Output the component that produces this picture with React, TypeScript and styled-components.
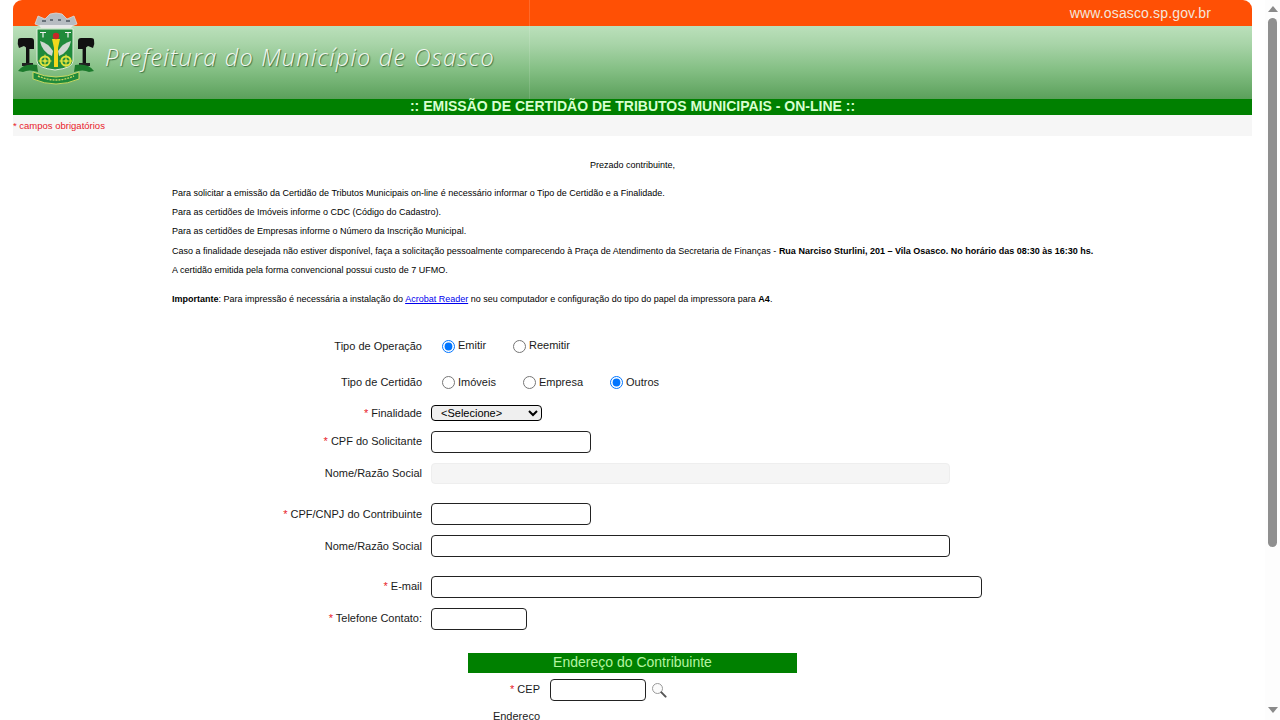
import styled, { createGlobalStyle } from "styled-components";

const GlobalStyle = createGlobalStyle`
  html, body {
    height: 100%;
    overflow: hidden;
  }
  body {
    margin: 0;
    background: #fff;
    color: #000;
    font-family: "Liberation Sans", Arial, sans-serif;
  }
`;

const Shell = styled.div`
  display: flex;
  height: 100vh;
`;

const Scroller = styled.main`
  flex: 1;
  min-width: 0;
  overflow-y: auto;
  scrollbar-width: none;
`;

const ScrollRail = styled.div`
  flex: none;
  width: 15px;
  display: flex;
  flex-direction: column;
  align-items: center;
  box-sizing: border-box;
  padding: 6px 0 7px;
  background: #fdfdfd;
`;

const ArrowUp = styled.div`
  width: 0;
  height: 0;
  border-left: 5px solid transparent;
  border-right: 5px solid transparent;
  border-bottom: 6px solid #8a8a8a;
`;

const ArrowDown = styled(ArrowUp)`
  border-bottom: 0;
  border-top: 6px solid #8a8a8a;
`;

const Thumb = styled.div`
  width: 9px;
  height: 529px;
  margin: 6px 0 auto;
  border-radius: 5px;
  background: #8f8f8f;
`;

const Page = styled.div`
  width: 1239px;
  margin: 0 auto;
  padding-bottom: 207px;
`;

const Header = styled.header`
  position: relative;
`;

const TopBar = styled.div`
  height: 26px;
  background: linear-gradient(to right, transparent 516px, #ff6a2a 516px, #ff6a2a 517px, transparent 517px), #ff5005;
  border-radius: 9px 9px 0 0;
  display: flex;
  justify-content: flex-end;
  align-items: center;
  padding-right: 41px;
  color: #f4e6dc;
  font-family: "Liberation Sans", sans-serif;
  font-size: 14px;
  letter-spacing: 0.15px;
`;

const Banner = styled.div`
  height: 73px;
  background:
    linear-gradient(to right, transparent 516px, rgba(255, 255, 255, 0.12) 516px, rgba(255, 255, 255, 0.12) 517px, transparent 517px),
    linear-gradient(#bbe0bb 0%, #a8d4a8 25%, #84bf84 60%, #5ba05b 100%);
  display: flex;
  align-items: center;
  padding: 0 0 11px 92px;
  box-sizing: border-box;
`;

const BannerTitle = styled.div`
  color: #f4f8f2;
  font-family: "Open Sans", sans-serif;
  font-style: italic;
  font-weight: 300;
  font-size: 23.5px;
  letter-spacing: 1.24px;
  text-shadow: 1px 1px 1px #3f6f3f;
  white-space: nowrap;
`;

const Crest = styled.svg`
  position: absolute;
  left: 1px;
  top: 10px;
  width: 84px;
  height: 78px;
`;

const TitleBar = styled.h1`
  margin: 0;
  height: 16px;
  background: #008000;
  color: #d8ffd0;
  font-size: 14px;
  font-weight: 700;
  line-height: 14px;
  text-align: center;
`;

const RequiredNote = styled.div`
  height: 21px;
  background: #f6f6f6;
  color: #e8202a;
  font-size: 9.5px;
  line-height: 22px;
`;

const Intro = styled.section`
  padding: 20px 0 0 159px;
  font-size: 9px;
  line-height: 19.33px;
`;

const Greeting = styled.p`
  margin: 0 0 8.45px;
  padding-right: 159px;
  text-align: center;
`;

const Line = styled.p<{ $gap?: number }>`
  margin: ${(p) => p.$gap ?? 0}px 0 0;
  white-space: nowrap;
`;

const DocLink = styled.a`
  color: #00e;
  text-decoration: underline;
`;

const Form = styled.form`
  display: flex;
  flex-direction: column;
  margin-top: 25.95px;
  font-size: 11px;
`;

const Row = styled.div<{ $gap?: number }>`
  display: flex;
  align-items: center;
  height: 22px;
  margin-top: ${(p) => p.$gap ?? 0}px;
`;

const Label = styled.label<{ $width?: number; $space?: number; $raised?: boolean }>`
  width: ${(p) => p.$width ?? 409}px;
  margin-right: ${(p) => p.$space ?? 9}px;
  padding-bottom: ${(p) => (p.$raised ? 2 : 0)}px;
  flex: none;
  text-align: right;
  color: #1a1a1a;
`;

const Star = styled.span`
  color: #e8202a;
`;

const Options = styled.div`
  display: flex;
  align-items: center;
  padding-left: 11px;
`;

const Option = styled.label<{ $width: number; $raised?: boolean }>`
  display: flex;
  align-items: center;
  width: ${(p) => p.$width}px;
  color: #1a1a1a;

  span {
    padding-bottom: ${(p) => (p.$raised ? 2 : 0)}px;
  }
`;

const Radio = styled.input.attrs({ type: "radio" })`
  width: 13px;
  height: 13px;
  margin: 0 3px 0 0;
  flex: none;
`;

const Select = styled.select`
  width: 111px;
  height: 16px;
  padding: 0 0 0 5px;
  border: 1px solid #000;
  border-radius: 4px;
  background: #efefef;
  font-family: "Liberation Sans", sans-serif;
  font-size: 11px;
`;

const TextInput = styled.input<{ $width: number }>`
  width: ${(p) => p.$width}px;
  height: 22px;
  box-sizing: border-box;
  padding: 0 4px;
  border: 1px solid #222;
  border-radius: 4px;
  background: #fff;

  &:disabled {
    height: 21px;
    margin-bottom: 1px;
    background: #f5f5f5;
    border-color: #eeeeee;
  }
`;

const SectionTitle = styled.h2`
  width: 329px;
  height: 20px;
  margin: 23px 0 0 455px;
  background: #008000;
  color: #b4f5a0;
  font-size: 14px;
  font-weight: 400;
  line-height: 18px;
  text-align: center;
`;

const SearchButton = styled.button`
  display: flex;
  width: 16px;
  height: 16px;
  margin: 0 0 0 5px;
  padding: 0;
  border: 0;
  background: none;
`;

function Crown() {
  return (
    <g>
      <path d="M21 14 L24 6 L31 9 L36 4 L42 3 L48 4 L53 9 L60 6 L63 14 L58 16 L26 16 Z" fill="#b7bcc2" stroke="#dcdcdc" strokeWidth="0.8" />
      <path d="M25 15 H59 L57 18 H27 Z" fill="#e7e7e7" />
      <path d="M28 11 h4 M36 10 h3 M44 10 h3 M52 11 h4" stroke="#4d5560" strokeWidth="1.6" />
    </g>
  );
}

function Hammer({ flip }: { flip?: boolean }) {
  return (
    <g transform={flip ? "translate(84 0) scale(-1 1)" : undefined}>
      <path d="M4 30 Q4 28 7 28 H17 Q20 28 20 31 V39 H14 L10 36 L5 38 Q3 34 4 30 Z" fill="#111" />
      <rect x="12" y="36" width="3.4" height="19" fill="#111" />
      <path d="M8 53 H19 V56 H8 Z" fill="#222" />
      <path d="M4 61 Q10 53 23 55 L24 62 Q15 59 9 62 Z" fill="#1c7a2c" />
    </g>
  );
}

function Gear({ x }: { x: number }) {
  return (
    <g>
      <circle cx={x} cy="51" r="4.6" fill="#1f8a3b" stroke="#dfe23e" strokeWidth="2" />
      <circle cx={x} cy="51" r="1.8" fill="#dfe23e" />
      <path d={`M${x - 6.5} 51 H${x + 6.5} M${x} 44.5 V57.5`} stroke="#dfe23e" strokeWidth="1" />
    </g>
  );
}

function CrestImage() {
  return (
    <Crest viewBox="0 0 84 78">
      <Crown />
      <Hammer />
      <Hammer flip />
      <path d="M23 19 H59 V51 Q59 58 41 60 Q23 58 23 51 Z" fill="#1f8a3b" stroke="#e6efe0" strokeWidth="1" />
      <path d="M26 31 Q34 33 39 41 L38 46 Q28 42 26 31 Z" fill="#cfd8d0" />
      <path d="M57 31 Q49 33 44 41 L45 46 Q55 42 57 31 Z" fill="#cfd8d0" />
      <path d="M38 29 H46 L44 38 V57 H40 V38 Z" fill="#f2d81c" />
      <circle cx="42" cy="26" r="3.2" fill="#c62828" />
      <path d="M26 22.5 h6 M29 22.5 v5 M51 22.5 h6 M54 22.5 v5" stroke="#f0f0f0" strokeWidth="1.2" />
      <Gear x={31} />
      <Gear x={52} />
      <path d="M19 62 Q42 72 65 62 L65 69 Q42 79 19 69 Z" fill="#1f8a3b" stroke="#c8d860" strokeWidth="1" />
      <path d="M24 66 Q42 74 60 66" stroke="#c8d860" strokeWidth="1.4" strokeDasharray="2 1" fill="none" />
    </Crest>
  );
}

function SearchIcon() {
  return (
    <svg width="16" height="16" viewBox="0 0 16 16">
      <circle cx="6.5" cy="6.5" r="5" fill="#fbfbfb" stroke="#9a9a9a" strokeWidth="1" />
      <path d="M10.4 10.4 L14.6 14.6" stroke="#555" strokeWidth="2" strokeLinecap="round" />
    </svg>
  );
}

export default function App() {
  return (
    <Shell>
      <GlobalStyle />
      <Scroller>
        <Page>
          <Header>
            <TopBar>www.osasco.sp.gov.br</TopBar>
            <Banner>
              <BannerTitle>Prefeitura do Município de Osasco</BannerTitle>
            </Banner>
            <CrestImage />
            <TitleBar>:: EMISSÃO DE CERTIDÃO DE TRIBUTOS MUNICIPAIS - ON-LINE ::</TitleBar>
            <RequiredNote>* campos obrigatórios</RequiredNote>
          </Header>

          <Intro>
            <Greeting>Prezado contribuinte,</Greeting>
            <Line>Para solicitar a emissão da Certidão de Tributos Municipais on-line é necessário informar o Tipo de Certidão e a Finalidade.</Line>
            <Line>Para as certidões de Imóveis informe o CDC (Código do Cadastro).</Line>
            <Line>Para as certidões de Empresas informe o Número da Inscrição Municipal.</Line>
            <Line>
              Caso a finalidade desejada não estiver disponível, faça a solicitação pessoalmente comparecendo à Praça de Atendimento da Secretaria de Finanças - <b>Rua Narciso Sturlini, 201 – Vila Osasco. No horário das 08:30 às 16:30 hs.</b>
            </Line>
            <Line>A certidão emitida pela forma convencional possui custo de 7 UFMO.</Line>
            <Line $gap={9.6}>
              <b>Importante</b>: Para impressão é necessária a instalação do <DocLink href="#">Acrobat Reader</DocLink> no seu computador e configuração do tipo do papel da impressora para <b>A4</b>.
            </Line>
          </Intro>

          <Form>
            <Row>
              <Label>Tipo de Operação</Label>
              <Options>
                <Option $width={71} $raised>
                  <Radio name="operacao" defaultChecked />
                  <span>Emitir</span>
                </Option>
                <Option $width={80} $raised>
                  <Radio name="operacao" />
                  <span>Reemitir</span>
                </Option>
              </Options>
            </Row>
            <Row $gap={14}>
              <Label>Tipo de Certidão</Label>
              <Options>
                <Option $width={81}>
                  <Radio name="certidao" />
                  <span>Imóveis</span>
                </Option>
                <Option $width={87}>
                  <Radio name="certidao" />
                  <span>Empresa</span>
                </Option>
                <Option $width={80}>
                  <Radio name="certidao" defaultChecked />
                  <span>Outros</span>
                </Option>
              </Options>
            </Row>
            <Row $gap={9}>
              <Label><Star>*</Star> Finalidade</Label>
              <Select defaultValue="">
                <option value="">&lt;Selecione&gt;</option>
              </Select>
            </Row>
            <Row $gap={7}>
              <Label $raised><Star>*</Star> CPF do Solicitante</Label>
              <TextInput $width={160} />
            </Row>
            <Row $gap={10}>
              <Label $raised>Nome/Razão Social</Label>
              <TextInput $width={519} disabled />
            </Row>
            <Row $gap={18}>
              <Label><Star>*</Star> CPF/CNPJ do Contribuinte</Label>
              <TextInput $width={160} />
            </Row>
            <Row $gap={10}>
              <Label>Nome/Razão Social</Label>
              <TextInput $width={519} />
            </Row>
            <Row $gap={19}>
              <Label $raised><Star>*</Star> E-mail</Label>
              <TextInput $width={551} />
            </Row>
            <Row $gap={10}>
              <Label $raised><Star>*</Star> Telefone Contato:</Label>
              <TextInput $width={96} />
            </Row>
            <SectionTitle>Endereço do Contribuinte</SectionTitle>
            <Row $gap={6}>
              <Label $width={527} $space={10} $raised><Star>*</Star> CEP</Label>
              <TextInput $width={96} />
              <SearchButton type="button">
                <SearchIcon />
              </SearchButton>
            </Row>
            <Row $gap={4}>
              <Label $width={527}>Endereco</Label>
            </Row>
          </Form>
        </Page>
      </Scroller>
      <ScrollRail>
        <ArrowUp />
        <Thumb />
        <ArrowDown />
      </ScrollRail>
    </Shell>
  );
}
